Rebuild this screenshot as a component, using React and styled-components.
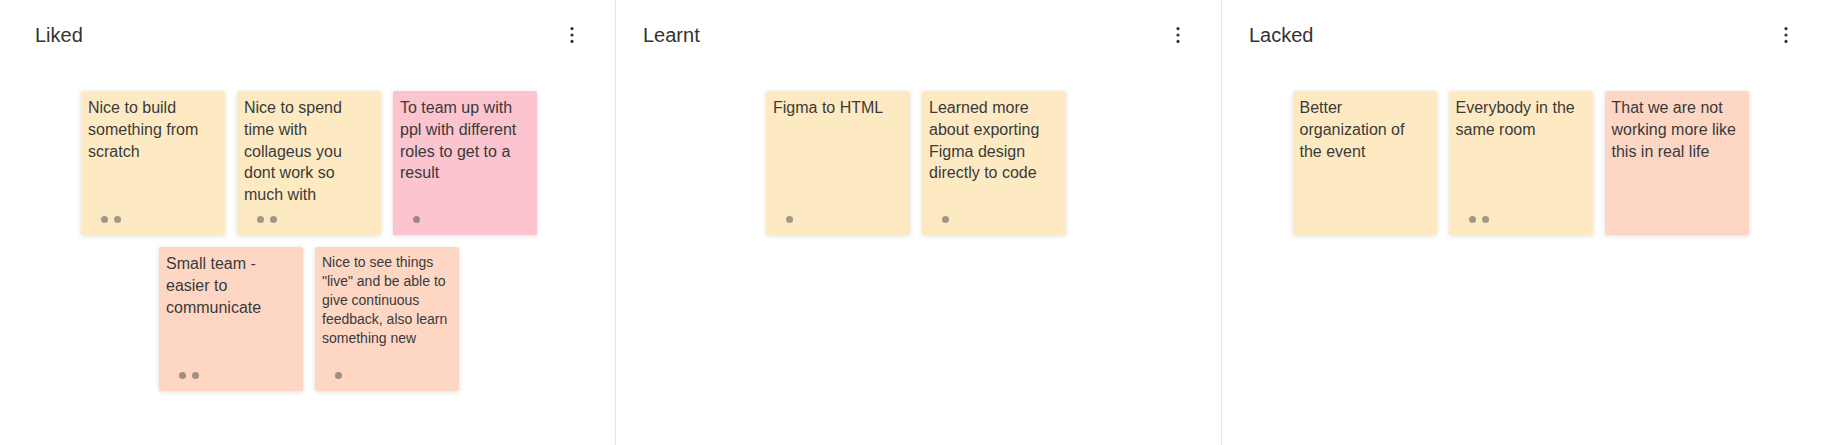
import React from 'react';
import styled, { createGlobalStyle } from 'styled-components';

const columns = [
  {
    title: 'Liked',
    notes: [
      { text: 'Nice to build something from scratch', color: 'yellow', votes: 2 },
      { text: 'Nice to spend time with collageus you dont work so much with', color: 'yellow', votes: 2 },
      { text: 'To team up with ppl with different roles to get to a result', color: 'pink', votes: 1 },
      { text: 'Small team - easier to communicate', color: 'peach', votes: 2 },
      {
        text: 'Nice to see things "live" and be able to give continuous feedback, also learn something new',
        color: 'peach',
        votes: 1,
        small: true,
      },
    ],
  },
  {
    title: 'Learnt',
    notes: [
      { text: 'Figma to HTML', color: 'yellow', votes: 1 },
      { text: 'Learned more about exporting Figma design directly to code', color: 'yellow', votes: 1 },
    ],
  },
  {
    title: 'Lacked',
    notes: [
      { text: 'Better organization of the event', color: 'yellow', votes: 0 },
      { text: 'Everybody in the same room', color: 'yellow', votes: 2 },
      { text: 'That we are not working more like this in real life', color: 'peach', votes: 0 },
    ],
  },
];

const noteColors = {
  yellow: '#feeac2',
  pink: '#fbc4cf',
  peach: '#fed7c4',
};

function MoreIcon() {
  return (
    <svg width="24" height="24" viewBox="0 0 24 24">
      <circle cx="12" cy="5.6" r="1.6" fill="#333" />
      <circle cx="12" cy="12" r="1.6" fill="#333" />
      <circle cx="12" cy="18.4" r="1.6" fill="#333" />
    </svg>
  );
}

function App() {
  return (
    <>
      <GlobalStyle />
      <Board>
        {columns.map((col, idx) => (
          <Column key={col.title} first={idx === 0}>
            <Header>
              <Title>{col.title}</Title>
              <MenuButton aria-label="more" last={idx === columns.length - 1}>
                <MoreIcon />
              </MenuButton>
            </Header>
            <Notes>
              {col.notes.map((note, i) => (
                <Note key={i} color={noteColors[note.color]}>
                  <NoteText small={note.small}>{note.text}</NoteText>
                  <Votes>
                    {Array.from({ length: note.votes }).map((_, v) => (
                      <Dot key={v} />
                    ))}
                  </Votes>
                </Note>
              ))}
            </Notes>
          </Column>
        ))}
      </Board>
    </>
  );
}

const GlobalStyle = createGlobalStyle`
  body {
    margin: 0;
    background: #fff;
    font-family: "Liberation Sans", Arial, sans-serif;
    color: #333;
  }
`;

const Board = styled.div`
  display: grid;
  grid-template-columns: 615px 606px 1fr;
  height: 100vh;
`;

const Column = styled.section`
  display: flex;
  flex-direction: column;
  padding: 0 32px 0 ${(p) => (p.first ? '35px' : '27px')};
  border-left: ${(p) => (p.first ? 'none' : '1px solid #e8e8e8')};
`;

const Header = styled.div`
  display: flex;
  align-items: center;
  justify-content: space-between;
  height: 70px;
`;

const Title = styled.h2`
  margin: 0;
  font-size: 20px;
  font-weight: 400;
  color: #333;
`;

const MenuButton = styled.button`
  display: flex;
  padding: 0;
  margin-right: ${(p) => (p.last ? '-6px' : '-1px')};
  border: none;
  background: none;
  cursor: pointer;
`;

const Notes = styled.div`
  display: flex;
  flex-wrap: wrap;
  justify-content: center;
  align-content: flex-start;
  gap: 12px;
  padding-top: 21px;
`;

const Note = styled.div`
  display: flex;
  flex-direction: column;
  width: 144px;
  height: 144px;
  box-sizing: border-box;
  padding: 6px 7px 12px;
  background: ${(p) => p.color};
  border-radius: 2px;
  box-shadow: 0 1px 5px rgba(0, 0, 0, 0.13);
`;

const NoteText = styled.p`
  margin: 0;
  font-size: ${(p) => (p.small ? '14px' : '16px')};
  line-height: 1.36;
  color: #3a3a3a;
`;

const Votes = styled.div`
  display: flex;
  gap: 6px;
  height: 7px;
  margin-top: auto;
  padding-left: 13px;
`;

const Dot = styled.span`
  width: 7px;
  height: 7px;
  border-radius: 50%;
  background: rgba(70, 70, 70, 0.5);
`;

export default App;
